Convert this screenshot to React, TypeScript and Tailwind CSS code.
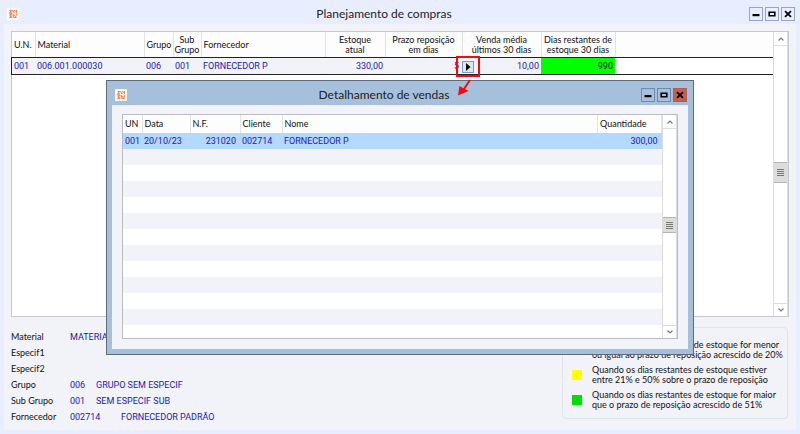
import { ReactNode } from 'react';

const materialColumns = [
  { label: 'U.N.', width: 'w-[23px]' },
  { label: 'Material', width: 'w-[109px]' },
  { label: 'Grupo', width: 'w-[29px]' },
  { label: 'Sub\nGrupo', width: 'w-[28px]', center: true },
  { label: 'Fornecedor', width: 'w-[124px]' },
  { label: 'Estoque\natual', width: 'w-[60px]', center: true },
  { label: 'Prazo reposição\nem dias', width: 'w-[77px]', center: true },
  { label: 'Venda média\núltimos 30 dias', width: 'w-[79px]', center: true },
  { label: 'Dias restantes de\nestoque 30 dias', width: 'w-[74px]', center: true },
];

const salesColumns = [
  { label: 'UN', width: 'w-[19px]' },
  { label: 'Data', width: 'w-[48px]' },
  { label: 'N.F.', width: 'w-[50px]' },
  { label: 'Cliente', width: 'w-[42px]' },
  { label: 'Nome', width: '' },
  { label: 'Quantidade', width: 'w-[64px]' },
];

const details = [
  { label: 'Material', code: 'MATERIAL', text: '' },
  { label: 'Especif1', code: '', text: '' },
  { label: 'Especif2', code: '', text: '' },
  { label: 'Grupo', code: '006', text: 'GRUPO SEM ESPECIF' },
  { label: 'Sub Grupo', code: '001', text: 'SEM ESPECIF SUB' },
  { label: 'Fornecedor', code: '002714', text: 'FORNECEDOR PADRÃO', wide: true },
];

const legend = [
  { color: 'bg-[#e8202a]', lines: ['Quando os dias restantes de estoque for menor', 'ou igual ao prazo de reposição acrescido de 20%'] },
  { color: 'bg-[#ffff00]', lines: ['Quando os dias restantes de estoque estiver', 'entre 21% e 50% sobre o prazo de reposição'] },
  { color: 'bg-[#00e000]', lines: ['Quando os dias restantes de estoque for maior', 'que o prazo de reposição acrescido de 51%'] },
];

const emptyRows = Array.from({ length: 12 }, (_, i) => i);

const AppIcon = () => (
  <svg viewBox="0 0 12 12" className="size-3 shrink-0" aria-hidden="true">
    <rect width="12" height="12" rx="1" fill="#fff" />
    <g fill="none" stroke="#f58044" strokeWidth="1.1">
      <path d="M2.5 2.5h2l-2 2.5h2.5M6 2.2v1.6l1.5 1M7 2.5l2.5 1M9.5 2v3.2M2.3 6.2h3M2.5 7.5l2.5 2M3.8 6.5v3M2.2 9.5h2M6.2 6v3.7M7 6.8l2.5 2.7M9.5 6.2v1.6M7 9.5h2.6" />
    </g>
  </svg>
);

const WindowButtons = ({ active = false }: { active?: boolean }) => {
  const base = 'flex h-3.5 w-3.5 items-center justify-center border';
  const normal = active ? 'border-[#7189a8] bg-[#a6bfdb]' : 'border-[#9aa6be] bg-[#e8eeff]';
  return (
    <div className="flex gap-0.5">
      <button type="button" aria-label="Minimizar" className={`${base} ${normal}`}>
        <svg viewBox="0 0 8 8" className="size-2"><path d="M.5 4h7v2.2h-7z" /></svg>
      </button>
      <button type="button" aria-label="Maximizar" className={`${base} ${normal}`}>
        <svg viewBox="0 0 8 8" className="size-2"><path d="M1.2 2.2h5.6v3.6H1.2z" fill="none" stroke="#000" strokeWidth="1.6" /></svg>
      </button>
      <button
        type="button"
        aria-label="Fechar"
        className={`${base} ${active ? 'border-[#a86058] bg-[#c9604f]' : normal}`}
      >
        <svg viewBox="0 0 8 8" className="size-2"><path d="M1 1.2l6 5.6M7 1.2l-6 5.6" stroke="#000" strokeWidth="1.8" /></svg>
      </button>
    </div>
  );
};

const TitleBar = ({ title, active = false }: { title: string; active?: boolean }) => (
  <header className="flex h-6 items-center pt-1 pr-px pl-[3px]">
    <AppIcon />
    <h1 className="flex-1 text-center font-['Lato',sans-serif] text-[12px] leading-[18px] text-[#222]">{title}</h1>
    <WindowButtons active={active} />
  </header>
);

const Chevron = ({ d }: { d: string }) => (
  <svg viewBox="0 0 8 8" className="size-2"><path d={d} fill="none" stroke="#777" strokeWidth="1.2" /></svg>
);

const ScrollBar = ({ thumb, before, after }: { thumb: string; before: string; after: string }) => (
  <div className="flex w-[15px] shrink-0 flex-col border-x border-[#dcdcdf] bg-white">
    <button type="button" aria-label="Rolar para cima" className="flex h-[14px] items-center justify-center border-b border-[#dcdcdf]">
      <Chevron d="M1.5 5.5L4 3l2.5 2.5" />
    </button>
    <div className={before} />
    <div className={`flex items-center justify-center border-y border-[#b4b4b4] bg-[#dcdcdc] ${thumb}`}>
      <svg viewBox="0 0 7 7" className="size-[7px]"><path d="M0 .5h7M0 2.5h7M0 4.5h7M0 6.5h7" stroke="#777" /></svg>
    </div>
    <div className={after} />
    <button type="button" aria-label="Rolar para baixo" className="flex h-[13px] items-center justify-center border-t border-[#dcdcdf]">
      <Chevron d="M1.5 2.5L4 5l2.5-2.5" />
    </button>
  </div>
);

const HeadCell = ({ children, className = '', center = false }: { children?: ReactNode; className?: string; center?: boolean }) => (
  <th
    scope="col"
    className={`border-r border-[#e2e2e6] bg-[#fdfdfd] font-['Lato',sans-serif] font-normal whitespace-pre text-[#111] ${center ? 'text-center' : 'px-0.5 text-left'} ${className}`}
  >
    {children}
  </th>
);

const SalesDialog = () => (
  <section
    role="dialog"
    aria-label="Detalhamento de vendas"
    className="absolute inset-x-0 top-20 mx-auto w-full max-w-[588px] border border-[#5f6b7a] bg-[#a6bfdb] px-[5px] pb-[5px]"
  >
    <TitleBar title="Detalhamento de vendas" active />
    <div className="bg-[#f2f3f9] px-2.5 pt-[9px] pb-2.5">
      <div className="flex h-[225px] border border-[#b9bcc4]">
        <div className="flex-1 overflow-hidden">
          <table className="w-full table-fixed border-collapse">
            <thead>
              <tr className="h-[18px]">
                {salesColumns.map((col) => (
                  <HeadCell key={col.label} className={col.width}>{col.label}</HeadCell>
                ))}
              </tr>
            </thead>
            <tbody>
              <tr className="h-4 bg-[#b3d9ff] text-[#2020b0]">
                <td className="px-0.5">001</td>
                <td className="px-0.5">20/10/23</td>
                <td className="px-1 text-right">231020</td>
                <td className="px-0.5">002714</td>
                <td className="px-0.5">FORNECEDOR P</td>
                <td className="px-1 text-right">300,00</td>
              </tr>
              {emptyRows.map((row) => (
                <tr key={row} className="h-4 odd:bg-white even:bg-[#f2f3f9]">
                  <td colSpan={6} />
                </tr>
              ))}
            </tbody>
          </table>
        </div>
        <ScrollBar before="h-[88px]" thumb="h-4" after="flex-1" />
      </div>
    </div>
  </section>
);

const MaterialGrid = () => (
  <div className="flex h-[286px] border border-[#c8c9ce] bg-white">
    <div className="flex-1">
      <table className="w-full table-fixed border-collapse">
        <thead>
          <tr className="h-[26px]">
            {materialColumns.map((col) => (
              <HeadCell key={col.label} className={col.width} center={col.center}>
                {col.label}
              </HeadCell>
            ))}
            <td className="bg-[#fdfdfd]" />
          </tr>
        </thead>
        <tbody>
          <tr className="h-4 bg-[#f2f3f9] text-[#2020b0] outline outline-[#222]">
            <td className="px-0.5">001</td>
            <td className="px-0.5">006.001.000030</td>
            <td className="px-0.5">006</td>
            <td className="px-0.5">001</td>
            <td className="px-0.5">FORNECEDOR P</td>
            <td className="px-0.5 text-right">330,00</td>
            <td className="relative px-[3px] text-right">
              5
              <span className="absolute -top-0.5 -right-[18px] z-10 flex h-[21px] w-6 items-center justify-center border-2 border-[#f00a14]">
                <button type="button" aria-label="Detalhar vendas" className="flex size-3 items-center justify-center border border-[#7f9db9] bg-[#dce6ef]">
                  <svg viewBox="0 0 8 8" className="size-2"><path d="M2 0l4.5 4L2 8z" /></svg>
                </button>
              </span>
            </td>
            <td className="px-0.5 text-right">10,00</td>
            <td className="bg-[#00ff00] px-0.5 text-right text-[#103010]">990</td>
            <td className="bg-white" />
          </tr>
        </tbody>
      </table>
    </div>
    <ScrollBar before="h-[116px]" thumb="h-[21px]" after="flex-1" />
  </div>
);

const App = () => {
  return (
    <div className="relative min-h-screen bg-[#e8eeff] px-1 pb-1 font-['Roboto',sans-serif] text-[9px] leading-[10px] text-[#222]">
      <TitleBar title="Planejamento de compras" />
      <main className="bg-[#f2f3f9] px-[7px] pt-[7px] pb-[5px]">
        <MaterialGrid />
        <div className="flex items-start justify-between">
          <dl className="pt-3">
            {details.map((item) => (
              <div key={item.label} className="flex h-4 items-center">
                <dt className="w-[59px] font-['Lato',sans-serif] text-[#111]">{item.label}</dt>
                <dd className="flex text-[#2020b0]">
                  <span className={item.wide ? 'w-[51px]' : 'w-[26px]'}>{item.code}</span>
                  <span>{item.text}</span>
                </dd>
              </div>
            ))}
          </dl>
          <ul className="mt-2.5 mr-px flex w-[226px] flex-col gap-[5px] rounded-sm border border-[#dfe3ea] pt-3 pb-2 pl-[9px] font-['Lato',sans-serif] text-[#111]">
            {legend.map((item) => (
              <li key={item.color} className="flex items-center gap-2.5">
                <span className={`size-2.5 shrink-0 ${item.color}`} />
                <p className="leading-[10px] whitespace-nowrap">
                  {item.lines[0]}
                  <br />
                  {item.lines[1]}
                </p>
              </li>
            ))}
          </ul>
        </div>
      </main>
      <SalesDialog />
      <svg viewBox="0 0 16 20" className="absolute top-[78px] left-[456px] h-5 w-4" aria-hidden="true">
        <path d="M14 2L8 11" stroke="#f00a14" strokeWidth="2" />
        <path d="M2 17.5L3.5 8l9 5z" fill="#f00a14" />
      </svg>
    </div>
  );
};

export default App;
